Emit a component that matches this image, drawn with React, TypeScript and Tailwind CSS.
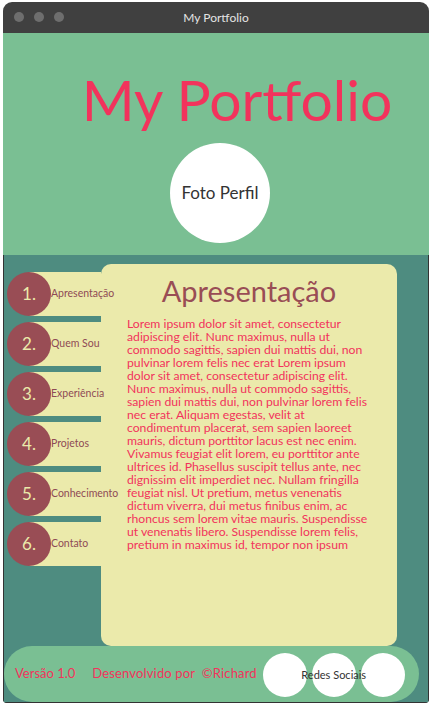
import React from "react";

const navItems = [
  "Apresentação",
  "Quem Sou",
  "Experiência",
  "Projetos",
  "Conhecimento",
  "Contato",
];

const lines = [
  "Lorem ipsum dolor sit amet, consectetur",
  "adipiscing elit. Nunc maximus, nulla ut",
  "commodo sagittis, sapien dui mattis dui, non",
  "pulvinar lorem felis nec erat Lorem ipsum",
  "dolor sit amet, consectetur adipiscing elit.",
  "Nunc maximus, nulla ut commodo sagittis,",
  "sapien dui mattis dui, non pulvinar lorem felis",
  "nec erat. Aliquam egestas, velit at",
  "condimentum placerat, sem sapien laoreet",
  "mauris, dictum porttitor lacus est nec enim.",
  "Vivamus feugiat elit lorem, eu porttitor ante",
  "ultrices id. Phasellus suscipit tellus ante, nec",
  "dignissim elit imperdiet nec. Nullam fringilla",
  "feugiat nisl. Ut pretium, metus venenatis",
  "dictum viverra, dui metus finibus enim, ac",
  "rhoncus sem lorem vitae mauris. Suspendisse",
  "ut venenatis libero. Suspendisse lorem felis,",
  "pretium in maximus id, tempor non ipsum",
];

export default function App() {
  return (
    <div className="min-h-[706px] bg-white px-[3px] pt-[2px] pb-[3px] font-['Lato',sans-serif]">
      <div className="w-[426px] h-[701px] flex flex-col rounded-t-[9px] rounded-b-[4px] overflow-hidden">
        {/* Title bar */}
        <div className="h-[31px] shrink-0 bg-[#404040] relative flex items-center justify-center">
          <div className="absolute left-[11px] top-[10px] flex gap-[10px]">
            <span className="w-[10px] h-[10px] rounded-full bg-[#6e6e6e]" />
            <span className="w-[10px] h-[10px] rounded-full bg-[#6e6e6e]" />
            <span className="w-[10px] h-[10px] rounded-full bg-[#6e6e6e]" />
          </div>
          <span className="text-[12px] text-[#e4e4e4]">My Portfolio</span>
        </div>

        {/* Header */}
        <div className="h-[222px] shrink-0 bg-[#7abf93] flex flex-col items-center">
          <h1 className="mt-[33px] ml-[42px] text-[57px] leading-[66px] text-[#f2335c] whitespace-nowrap">
            My Portfolio
          </h1>
          <div className="mt-[11px] ml-[8px] w-[100px] h-[100px] rounded-full bg-white flex items-center justify-center text-[17px] text-[#333]">
            Foto Perfil
          </div>
        </div>

        {/* Body */}
        <div className="flex-1 bg-[#4e8c80] border-x border-b border-[#333] flex flex-col">
          <div className="flex flex-1 pt-[9px]">
            <ul className="w-[97px] shrink-0 pt-[8px] flex flex-col gap-[6px]">
              {navItems.map((label, i) => (
                <li key={label} className="ml-[25px] h-[44px] bg-[#ebeaab] flex items-center">
                  <span className="-ml-[22px] w-[44px] h-[44px] shrink-0 rounded-full bg-[#994d55] flex items-center justify-center text-[17px] text-[#ebeaab]">
                    {i + 1}.
                  </span>
                  <span className="relative text-[10.5px] text-[#8f4a55] whitespace-nowrap">{label}</span>
                </li>
              ))}
            </ul>
            <div className="w-[296px] bg-[#ebeaab] rounded-[10px] flex flex-col items-center">
              <h2 className="mt-[9px] text-[29px] leading-[36px] text-[#994d55]">Apresentação</h2>
              <p className="mt-[8px] self-start pl-[26px] text-[12.2px] leading-[13px] text-[#f2335c]">
                {lines.map((l) => (
                  <span key={l} className="block whitespace-nowrap">
                    {l}
                  </span>
                ))}
              </p>
            </div>
          </div>

          {/* Footer */}
          <footer className="h-[56px] w-[415px] shrink-0 bg-[#7abf93] rounded-full flex items-center pl-[11px] text-[13px] text-[#f2335c]">
            <span>Versão 1.0</span>
            <span className="ml-[17px] tracking-[0.15px]">Desenvolvido por &nbsp;©Richard</span>
            <div className="ml-[6px] mt-[2px] flex gap-[5px]">
              <span className="w-[44px] h-[44px] rounded-full bg-white" />
              <span className="relative z-10 w-[44px] h-[44px] rounded-full bg-white flex items-center justify-center">
                <span className="text-[11px] text-[#333] whitespace-nowrap">Redes Sociais</span>
              </span>
              <span className="w-[44px] h-[44px] rounded-full bg-white" />
            </div>
          </footer>
        </div>
      </div>
    </div>
  );
}
